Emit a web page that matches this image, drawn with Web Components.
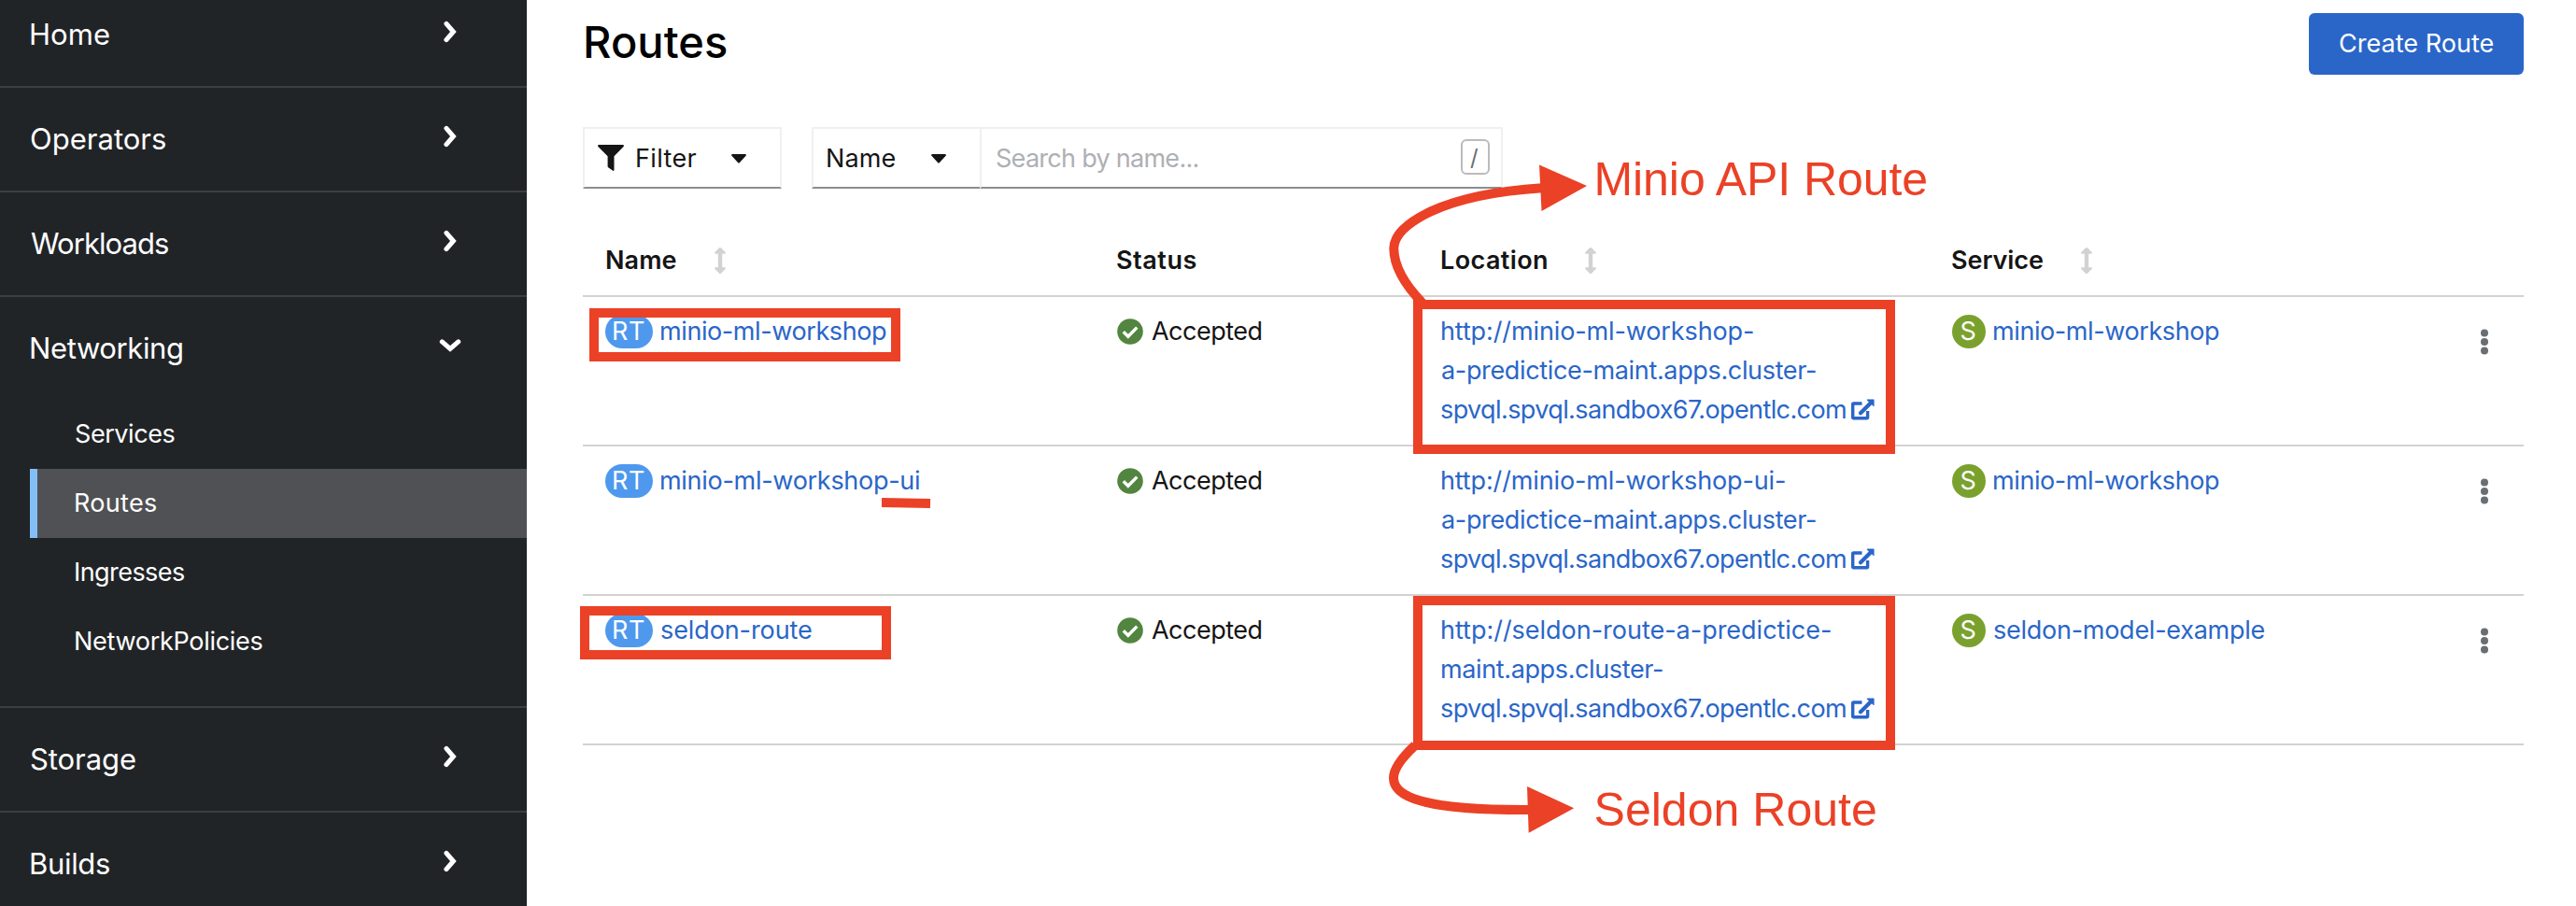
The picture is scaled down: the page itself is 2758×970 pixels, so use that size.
<!DOCTYPE html>
<html lang="en">
<head>
<meta charset="utf-8">
<title>Routes</title>
<style>
html,body{margin:0;padding:0;background:#fff}
body{width:2758px;height:970px;overflow:hidden;font-family:Inter,"Liberation Sans",sans-serif;font-size:27px;line-height:42px;color:#151515}
</style>
</head>
<body>
<routes-page></routes-page>
<script>
const define = (name, html, after) => {
  const tpl = document.createElement('template');
  tpl.innerHTML = html;
  customElements.define(name, class extends HTMLElement {
    connectedCallback() {
      if (this.shadowRoot) return;
      this.attachShadow({mode: 'open'}).append(tpl.content.cloneNode(true));
      if (after) after(this, this.shadowRoot);
    }
  });
};

/* One line of text tracked so that its ink spans exactly `w` pixels. */
const ctx = document.createElement('canvas').getContext('2d');
define('fit-text', `<style>
:host{display:block;flex:none;white-space:nowrap}
span{display:block}
</style><span><slot></slot></span>`, (el, root) => {
  const w = +el.getAttribute('w'), text = el.textContent, cs = getComputedStyle(el);
  ctx.font = `${cs.fontWeight} ${cs.fontSize} ${cs.fontFamily}`;
  const m = ctx.measureText(text);
  const ink = m.actualBoundingBoxLeft + m.actualBoundingBoxRight;
  const span = root.querySelector('span');
  el.style.width = w + 'px';
  span.style.marginLeft = m.actualBoundingBoxLeft + 'px';
  if (text.length > 1) span.style.letterSpacing = (w - ink) / (text.length - 1) + 'px';
});

define('nav-chevron', `<style>
:host{display:block;flex:none;width:24px;height:24px;margin-bottom:6px}
:host([open]) svg{transform:rotate(90deg)}
svg{display:block}
</style><svg width="24" height="24" viewBox="0 0 24 24"><path d="M7.9 3.3L15.4 12l-7.5 8.7" fill="none" stroke="#fff" stroke-width="5" stroke-linecap="round" stroke-linejoin="miter"/></svg>`);

define('nav-section', `<style>
:host{display:block;border-bottom:2px solid #3c3f42}
.head{height:110px;display:flex;align-items:center;justify-content:space-between;padding:0 70px 0 33px;font-size:31px}
.sub{display:none}
:host([open]) .sub{display:block;padding-bottom:32px}
</style><div class="head"><slot name="label"></slot><nav-chevron></nav-chevron></div><div class="sub"><slot></slot></div>`,
(el, root) => { if (el.hasAttribute('open')) root.querySelector('nav-chevron').setAttribute('open', ''); });

define('nav-link', `<style>
:host{display:flex;align-items:center;height:74px;margin-left:32px;padding-left:41px;border-left:8px solid transparent}
:host([active]){background:#505154;border-left-color:#84bef7}
</style><slot></slot>`);

define('side-nav', `<style>
:host{display:block;width:564px;height:970px;overflow:hidden;background:#212427;color:#fff}
nav{margin-top:-18px}
</style><nav>
<nav-section><fit-text slot="label" w="84">Home</fit-text></nav-section>
<nav-section><fit-text slot="label" w="144">Operators</fit-text></nav-section>
<nav-section><fit-text slot="label" w="147">Workloads</fit-text></nav-section>
<nav-section open><fit-text slot="label" w="162">Networking</fit-text>
<nav-link><fit-text w="105.5">Services</fit-text></nav-link>
<nav-link active><fit-text w="86">Routes</fit-text></nav-link>
<nav-link><fit-text w="116">Ingresses</fit-text></nav-link>
<nav-link><fit-text w="199.5">NetworkPolicies</fit-text></nav-link>
</nav-section>
<nav-section><fit-text slot="label" w="112">Storage</fit-text></nav-section>
<nav-section><fit-text slot="label" w="84">Builds</fit-text></nav-section>
</nav>`);

define('page-header', `<style>
:host{display:flex;height:66px;justify-content:space-between;align-items:center}
h1{margin:0 0 4px 3px;font-size:47px;font-weight:500;line-height:60px;color:#000}
button{all:unset;box-sizing:border-box;width:230px;height:66px;border-radius:6px;background:#2a66c8;color:#fff;padding-left:33px;display:flex;align-items:center}
</style><h1><fit-text w="151">Routes</fit-text></h1><button><fit-text w="164.5">Create Route</fit-text></button>`);

define('caret-down', `<style>:host{display:block;flex:none;height:10px;margin-top:2px}svg{display:block}</style>
<svg width="16" height="10" viewBox="0 0 16 10"><path d="M1 0h14q1.5.5.6 1.8L9 9q-1 1.2-2 0L.4 1.8Q-.5.5 1 0z" fill="#151515"/></svg>`);

define('control-box', `<style>
:host{display:flex;box-sizing:border-box;height:66px;align-items:center;border:2px solid #f0f0f0;border-bottom-color:#8a8d90;background:#fff}
</style><slot></slot>`);

define('list-toolbar', `<style>
:host{display:flex;margin-top:56px;height:66px}
fit-text{margin-top:1px}
.filter{width:213px;padding-left:14px;margin-right:32px}
.filter svg{margin-right:14px;flex:none}
.filter caret-down{margin-left:37px}
.name{width:180px;padding-left:15px;border-right:0}
.name caret-down{margin-left:38px}
.search{width:560px;padding:0 12px 0 16px;justify-content:space-between;color:#aeb0b3}
kbd{box-sizing:border-box;width:31px;height:38px;border:2px solid #bbb;border-radius:6px;display:flex;align-items:center;justify-content:center;font:24px/32px Inter,sans-serif;color:#6a6e73;margin-bottom:2px}
</style>
<control-box class="filter"><svg width="28" height="28" viewBox="0 0 28 28"><path d="M.8 0h26.4q1.2.8.4 2L17.5 12.2V27q-.2 1.2-1.3.8l-5-3.6q-.6-.4-.6-1.2V12.2L.4 2Q-.4.8.8 0z" fill="#151515"/></svg><fit-text w="63.5">Filter</fit-text><caret-down></caret-down></control-box>
<control-box class="name"><fit-text w="72.5">Name</fit-text><caret-down></caret-down></control-box>
<control-box class="search"><fit-text w="215.5">Search by name...</fit-text><kbd><fit-text w="11">/</fit-text></kbd></control-box>`);

define('sort-icon', `<style>:host{display:block;flex:none;height:28px;margin-bottom:1px}svg{display:block}</style>
<svg width="12" height="28" viewBox="0 0 12 28"><path d="M6 0q.6 0 1.2.6L11.6 5q.9 1.5-.8 1.8H8.200v14.400h2.600q1.700.300.800 1.800l-4.400 4.400Q6.600 28 6 28t-1.200-.600L.4 23q-.9-1.500.8-1.800H3.800V6.800H1.200Q-.5 6.500.4 5L4.800.600Q5.400 0 6 0z" fill="#d2d2d2"/></svg>`);

define('table-head', `<style>
:host{display:grid;grid-template-columns:547px 347px 547px 1fr;height:74px;padding-left:25px;border-bottom:2px solid #d2d2d2;font-weight:600}
div{display:flex;align-items:center;gap:41px}
</style>
<div><fit-text w="74.5">Name</fit-text><sort-icon></sort-icon></div>
<div><fit-text w="84.5">Status</fit-text></div>
<div><fit-text w="113">Location</fit-text><sort-icon></sort-icon></div>
<div><fit-text w="97">Service</fit-text><sort-icon></sort-icon></div>`);

define('kind-badge', `<style>
:host{display:flex;box-sizing:border-box;flex:none;height:36px;border-radius:18px;align-items:center;justify-content:center;color:#fff;margin-top:-1px;line-height:36px}
:host([kind=route]){width:51px;background:#4e99ed}
:host([kind=service]){width:36px;background:#7aa12e}
</style><slot></slot>`);

define('ok-icon', `<style>:host{display:block;flex:none;height:28px}svg{display:block}</style>
<svg width="28" height="28" viewBox="0 0 28 28"><circle cx="14" cy="14" r="13.8" fill="#52853f"/><path d="M6.8 14.3l5 5L21.3 9.600" fill="none" stroke="#fff" stroke-width="3.400"/></svg>`);

define('route-row', `<style>
:host{display:grid;grid-template-columns:548px 347px 547px 1fr 46px;height:126px;padding:16px 0 16px 24px;border-bottom:2px solid #d2d2d2;color:#2a66c8}
.line{display:flex;align-items:center;height:42px}
.line fit-text{margin-top:0}
.res{gap:9px}
.st{gap:9px;color:#151515}
.st ok-icon{margin-bottom:1px}
.loc{padding-left:1px}
.loc .line{gap:6px}
.loc .last{margin-left:-1px}
.menu{padding-top:17px}
svg{display:block}
</style>
<div><div class="line res"><kind-badge kind="route"><fit-text w="33">RT</fit-text></kind-badge><slot name="name"></slot></div></div>
<div><div class="line st"><ok-icon></ok-icon><fit-text w="117.5">Accepted</fit-text></div></div>
<div class="loc"><div class="line"><slot name="url1"></slot></div><div class="line"><slot name="url2"></slot></div>
<div class="line last"><fit-text w="433">spvql.spvql.sandbox67.opentlc.com</fit-text><svg width="25" height="24" viewBox="0 0 25 24"><path d="M11.5 5H2.500a.8.800 0 0 0-.8.800V20a.800.800 0 0 0 .800.800H16.800a.800.800 0 0 0 .800-.800V13" fill="none" stroke="#2a66c8" stroke-width="3.400"/><path d="M10 15.200L21 4.200" stroke="#2a66c8" stroke-width="4.200" stroke-linecap="round"/><path d="M17.300.500h6.500q.8 0 .8.800v6.500q-.5.500-1 0L16.800 1.500q-.4-.6.5-1z" fill="#2a66c8"/></svg></div></div>
<div><div class="line res"><kind-badge kind="service"><fit-text w="17">S</fit-text></kind-badge><slot name="service"></slot></div></div>
<div class="menu"><svg width="8" height="30" viewBox="0 0 8 30" fill="#6a6e73"><circle cx="4" cy="5.400" r="4"/><circle cx="4" cy="15" r="4"/><circle cx="4" cy="24.600" r="4"/></svg></div>`);

define('annotation-layer', `<style>
:host{position:absolute;left:0;top:0;width:2758px;height:970px;pointer-events:none;font:50px/48px "Liberation Sans",Arial,sans-serif;color:#eb4126}
svg{display:block}
fit-text{position:absolute}
.a{left:1710.5px;top:168px}.b{left:1708.5px;top:843px}
</style>
<svg width="2758" height="970" viewBox="0 0 2758 970" fill="none" stroke="#eb4126" stroke-width="10">
<rect x="636" y="335" width="323" height="47"/>
<rect x="626" y="654" width="323" height="47"/>
<rect x="1518" y="326" width="506" height="155"/>
<rect x="1518" y="643" width="506" height="155"/>
<path d="M944 538L996 539"/>
<path d="M1524 325.5C1505 306 1492.3 285 1492.3 266C1492.3 240 1545 208 1651 201.3"/>
<path d="M1515 798C1500 812 1492 823 1492 833C1492 852 1520 867.5 1637 867"/>
<g fill="#eb4126" stroke="none"><path d="M1648 176.5L1699 199L1650.5 226z"/><path d="M1635 842L1685.2 865.3L1636.7 891.7z"/></g>
</svg>
<fit-text class="a" w="354.5">Minio API Route</fit-text>
<fit-text class="b" w="299.5">Seldon Route</fit-text>`);

define('routes-page', `<style>
:host{display:flex;position:relative;width:2758px;height:970px;overflow:hidden}
main{flex:1;padding:14px 56px 0 60px}
section{margin-top:40px}
</style>
<side-nav></side-nav>
<main><page-header></page-header><list-toolbar></list-toolbar>
<section><table-head></table-head>
<route-row><fit-text slot="name" w="241">minio-ml-workshop</fit-text><fit-text slot="url1" w="333">http://minio-ml-workshop-</fit-text><fit-text slot="url2" w="400">a-predictice-maint.apps.cluster-</fit-text><fit-text slot="service" w="241">minio-ml-workshop</fit-text></route-row>
<route-row><fit-text slot="name" w="276">minio-ml-workshop-ui</fit-text><fit-text slot="url1" w="367">http://minio-ml-workshop-ui-</fit-text><fit-text slot="url2" w="400">a-predictice-maint.apps.cluster-</fit-text><fit-text slot="service" w="241">minio-ml-workshop</fit-text></route-row>
<route-row><fit-text slot="name" w="161">seldon-route</fit-text><fit-text slot="url1" w="416">http://seldon-route-a-predictice-</fit-text><fit-text slot="url2" w="236">maint.apps.cluster-</fit-text><fit-text slot="service" w="289.5">seldon-model-example</fit-text></route-row>
</section></main>
<annotation-layer></annotation-layer>`);
</script>
</body>
</html>
